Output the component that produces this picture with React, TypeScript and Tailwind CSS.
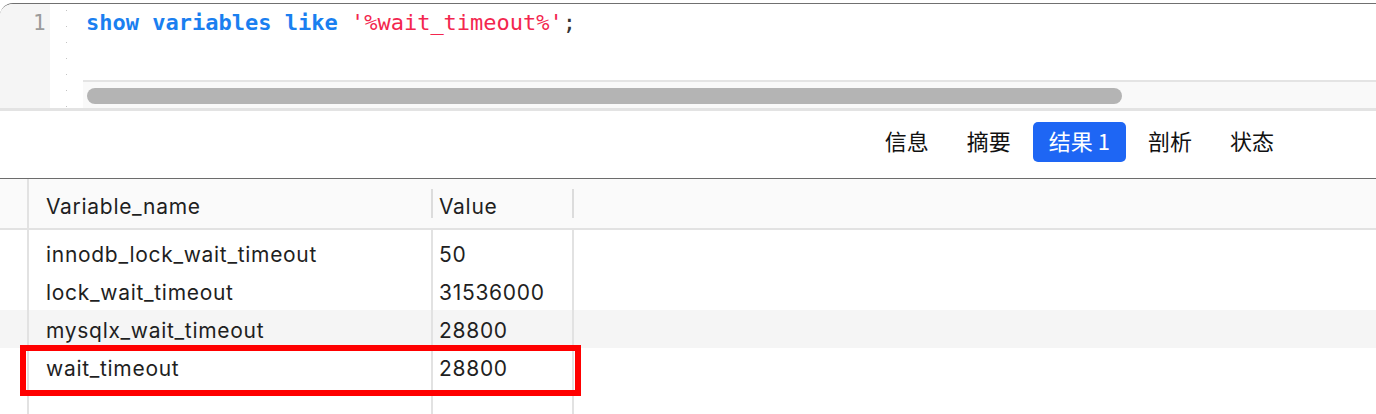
const rows = [
  { name: 'innodb_lock_wait_timeout', value: '50' },
  { name: 'lock_wait_timeout', value: '31536000' },
  { name: 'mysqlx_wait_timeout', value: '28800', shaded: true },
  { name: 'wait_timeout', value: '28800' },
  { name: '', value: '' },
];

const tabs = ['信息', '摘要', '结果 1', '剖析', '状态'];

function Row({ name, value, shaded, h }: { name: string; value: string; shaded?: boolean; h: string }) {
  return (
    <div className={`flex ${h} ${shaded ? 'bg-[#f5f5f5]' : ''}`}>
      <div className="w-[27px] shrink-0" />
      <div className="w-[404px] shrink-0 border-l-2 border-[#e2e2e2] pl-[17px] pt-[4px] flex items-center">{name}</div>
      <div className="w-[141px] shrink-0 border-l-2 border-[#e2e2e2] pl-[6px] pt-[4px] flex items-center">{value}</div>
      <div className="flex-1 border-l-2 border-[#e2e2e2]" />
    </div>
  );
}

export default function App() {
  return (
    <div className="relative w-[1376px] h-[414px] overflow-hidden bg-white font-['Inter',sans-serif] text-[#1f1f1f]">
      {/* editor */}
      <div className="mt-[3px] h-[105px] flex border-t border-[#707070] rounded-tl-[13px] overflow-hidden">
        <div className="w-[50px] shrink-0 bg-[#f5f5f5] pt-[5px] pl-[33px] font-['DejaVu_Sans_Mono',monospace] text-[21px] leading-[28px] text-[#9b9b9b]">
          1
        </div>
        <div className="w-[33px] shrink-0 flex justify-start pl-[16px] pt-[6px]">
          <div className="w-px h-full bg-[linear-gradient(#c4c4c4_1px,transparent_1px)] bg-[length:1px_16px]" />
        </div>
        <div className="flex-1 flex flex-col">
          <div className="pt-[5px] pl-[3px] font-['DejaVu_Sans_Mono',monospace] text-[22px] leading-[28px] whitespace-pre">
            <span className="font-bold text-[#1a7ff0]">show variables like </span>
            <span className="text-[#f3264e]">'%wait_timeout%'</span>
            <span className="text-[#333]">;</span>
          </div>
          <div className="mt-auto h-[28px] border-t-2 border-[#e4e4e4] bg-[#f9f9f9] pl-[4px] pt-[6px]">
            <div className="w-[1035px] h-[16px] rounded-full bg-[#b4b4b4]" />
          </div>
        </div>
      </div>
      <div className="h-[3px] bg-[#e3e3e3]" />

      {/* tabs */}
      <div className="h-[67px] flex justify-end items-start gap-[6px] pr-[86px] pt-[11px] font-['Noto_Sans_CJK_SC',sans-serif] text-[22px]">
        {tabs.map((t) => (
          <div
            key={t}
            className={`h-[40px] px-[16px] pb-[3px] flex items-center rounded-[5px] ${
              t === '结果 1' ? 'bg-[#1e66f4] text-white' : 'text-[#111]'
            }`}
          >
            {t}
          </div>
        ))}
      </div>
      <div className="h-px bg-[#6c6c6c]" />

      {/* table */}
      <div className="text-[21px] tracking-[0.7px]">
        <div className="flex h-[51px] bg-[#fafafa] border-b-2 border-[#e2e2e2]">
          <div className="w-[27px] shrink-0" />
          <div className="w-[404px] shrink-0 border-l-2 border-[#e2e2e2] pl-[17px] pt-[6px] flex items-center">Variable_name</div>
          <div className="w-[2px] my-[10px] bg-[#dcdcdc]" />
          <div className="w-[139px] shrink-0 pl-[6px] pt-[6px] flex items-center">Value</div>
          <div className="w-[2px] my-[10px] bg-[#dcdcdc]" />
          <div className="flex-1" />
        </div>
        <Row name="" value="" h="h-[4px]" />
        {rows.map((r, i) => (
          <Row key={i} name={r.name} value={r.value} shaded={r.shaded} h="h-[38px]" />
        ))}
      </div>

      {/* highlight annotation */}
      <div className="absolute left-[20px] top-[345px] w-[561px] h-[51px] border-[6px] border-[#ff0000]" />
    </div>
  );
}
